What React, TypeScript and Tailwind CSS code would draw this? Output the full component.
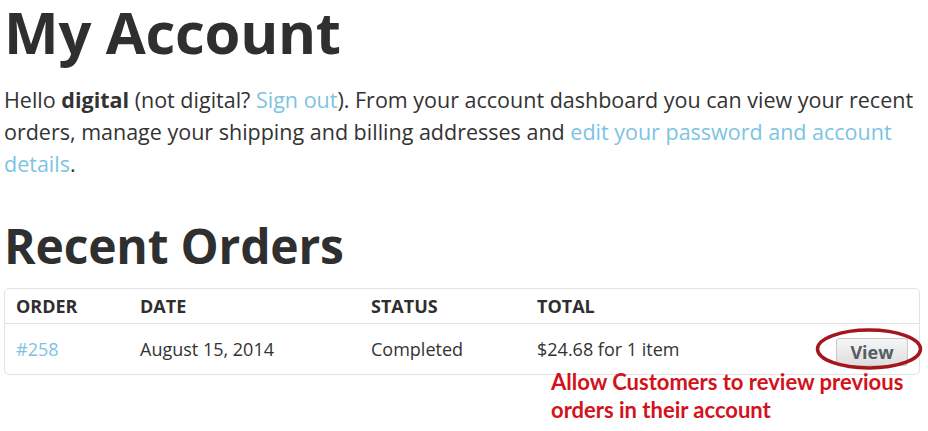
import React from "react";

const link = "text-[#7dc3e3]";

const App = () => {
  return (
    <div className="w-[928px] h-[431px] bg-white px-[4px] text-[#333333] font-['Open_Sans',sans-serif] overflow-hidden">
      <h1 className="text-[58px] font-bold leading-[64px] tracking-[-0.3px] text-[#2f2f2f]">
        My Account
      </h1>
      <p className="mt-[20px] text-[21.5px] leading-[32px] pr-[2px]">
        Hello <strong className="font-bold">digital</strong> (not digital?{" "}
        <a className={link}>Sign out</a>). From your account dashboard you can
        view your recent orders, manage your shipping and billing addresses and{" "}
        <a className={link}>edit your password and account details</a>.
      </p>
      <h2 className="mt-[38px] text-[48px] font-bold leading-[56px] tracking-[-0.2px] text-[#2f2f2f]">
        Recent Orders
      </h2>
      <div className="mt-[14px] w-[916px] border border-[#e2e2e2] rounded-[5px]">
        <div className="grid grid-cols-[124px_231px_166px_1fr] items-center h-[35px] border-b border-[#e2e2e2] text-[18px] font-bold text-[#2f2f2f]">
          <div className="pl-[11px]">ORDER</div>
          <div className="pl-[11px]">DATE</div>
          <div className="pl-[11px]">STATUS</div>
          <div className="pl-[11px]">TOTAL</div>
        </div>
        <div className="grid grid-cols-[124px_231px_166px_1fr] items-center h-[50px] text-[18px]">
          <div className={`pl-[11px] ${link}`}>#258</div>
          <div className="pl-[11px]">August 15, 2014</div>
          <div className="pl-[11px]">Completed</div>
          <div className="pl-[11px] flex items-center justify-between pr-[11px]">
            <span>$24.68 for 1 item</span>
            <span className="relative mt-[5px]">
              <button className="w-[72px] h-[28px] rounded-[3px] border border-[#c8c8c8] bg-gradient-to-b from-[#f6f6f6] to-[#dedede] text-[18px] font-bold text-[#555d66] leading-none">
                View
              </button>
              <svg
                className="absolute left-[-21px] top-[-12px] pointer-events-none"
                width="108"
                height="46"
                viewBox="0 0 108 46"
              >
                <ellipse cx="54" cy="23" rx="51.5" ry="19" fill="none" stroke="#a5161c" strokeWidth="3.5" />
              </svg>
            </span>
          </div>
        </div>
      </div>
      <div className="ml-[547px] mt-[-7px] text-[22px] leading-[28px] font-bold text-[#d3121c] font-['Lato',sans-serif]">
        Allow Customers to review previous
        <br />
        orders in their account
      </div>
    </div>
  );
};

export default App;
